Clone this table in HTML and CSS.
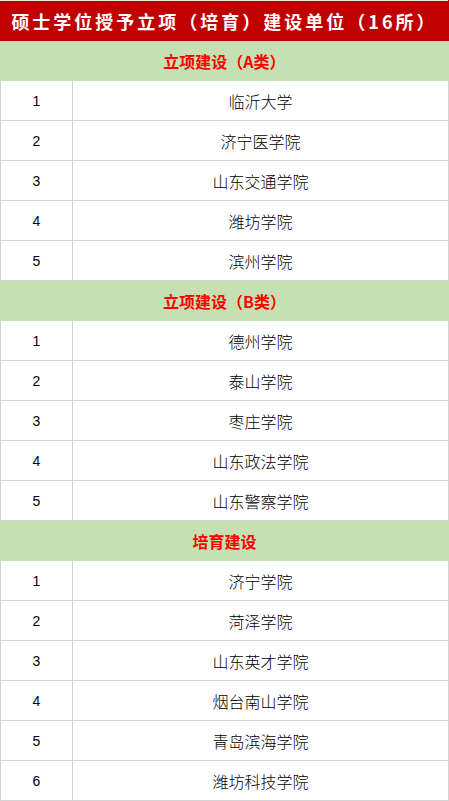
FILE: index.html
```html
<!DOCTYPE html>
<html lang="zh">
<head>
<meta charset="utf-8">
<link rel="stylesheet" href="styles.css">
</head>
<body>
<table class="list">
  <colgroup><col class="col-num"><col class="col-name"></colgroup>
  <tr><th colspan="2" class="title">硕士学位授予立项（培育）建设单位（16所）</th></tr>
  <tr><th colspan="2" class="section">立项建设（A类）</th></tr>
  <tr><td class="num">1</td><td class="name">临沂大学</td></tr>
  <tr><td class="num">2</td><td class="name">济宁医学院</td></tr>
  <tr><td class="num">3</td><td class="name">山东交通学院</td></tr>
  <tr><td class="num">4</td><td class="name">潍坊学院</td></tr>
  <tr><td class="num">5</td><td class="name">滨州学院</td></tr>
  <tr><th colspan="2" class="section">立项建设（B类）</th></tr>
  <tr><td class="num">1</td><td class="name">德州学院</td></tr>
  <tr><td class="num">2</td><td class="name">泰山学院</td></tr>
  <tr><td class="num">3</td><td class="name">枣庄学院</td></tr>
  <tr><td class="num">4</td><td class="name">山东政法学院</td></tr>
  <tr><td class="num">5</td><td class="name">山东警察学院</td></tr>
  <tr><th colspan="2" class="section">培育建设</th></tr>
  <tr><td class="num">1</td><td class="name">济宁学院</td></tr>
  <tr><td class="num">2</td><td class="name">菏泽学院</td></tr>
  <tr><td class="num">3</td><td class="name">山东英才学院</td></tr>
  <tr><td class="num">4</td><td class="name">烟台南山学院</td></tr>
  <tr><td class="num">5</td><td class="name">青岛滨海学院</td></tr>
  <tr><td class="num">6</td><td class="name">潍坊科技学院</td></tr>
</table>
</body>
</html>
```
FILE: styles.css
```css
html, body {
  margin: 0;
  padding: 0;
  background: #ffffff;
}
.list {
  width: 449px;
  border-collapse: collapse;
  table-layout: fixed;
  font-family: "Noto Sans CJK SC", "Liberation Sans", sans-serif;
}
.col-num {
  width: 72px;
}
.list th, .list td {
  padding: 0;
  height: 39px;
  border: 1px solid #d4d4d4;
  text-align: center;
  vertical-align: middle;
}
.title {
  background: #c00000;
  color: #ffffff;
  font-size: 18px;
  font-weight: bold;
  letter-spacing: 3px;
  border-color: #c00000 !important;
  border-top-color: #e8e8e8 !important;
}
.section {
  background: #c6e0b4;
  color: #ff0000;
  font-size: 16px;
  font-weight: bold;
  border-color: #c6e0b4 !important;
}
.num {
  font-family: "Liberation Sans", sans-serif;
  font-size: 14px;
  color: #000;
}
.name {
  font-size: 16px;
  font-weight: 300;
  color: #000;
}
```
